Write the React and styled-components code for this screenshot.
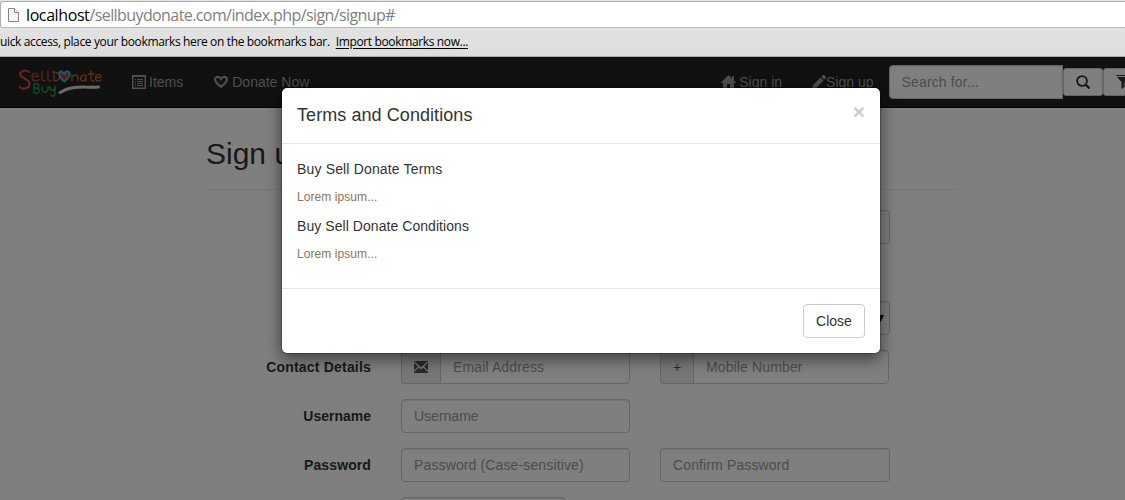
import React from "react";
import styled, { createGlobalStyle } from "styled-components";

const Global = createGlobalStyle`
  *, *::before, *::after { box-sizing: border-box; }
  html, body { margin: 0; height: 100%; overflow: hidden; background: #fff; }
  body { font: 14px/20px "Liberation Sans", Arial, sans-serif; color: #333; }
  #root { height: 100%; }
`;

const Window = styled.div`
  height: 500px;
  overflow: hidden;
  display: flex;
  flex-direction: column;
`;

const BrowserBar = styled.header`
  height: 57px;
  flex: none;
  background: linear-gradient(#e6e6e6, #dedede);
  border-bottom: 1px solid #a8acac;
  white-space: nowrap;
`;

const AddressBar = styled.div`
  height: 27px;
  margin: 1px -4px 0 0;
  display: flex;
  align-items: center;
  padding-left: 6px;
  background: #fff;
  border: 1px solid #adadad;
  border-bottom-color: #b9b9b9;
  border-radius: 3px;
`;

const Url = styled.span`
  margin-left: 6px;
  font: 16px/24px "Open Sans", sans-serif;
  letter-spacing: -0.59px;
  color: #808080;
`;

const Host = styled.span`
  letter-spacing: -0.4px;
  color: #000;
`;

const BookmarkBar = styled.div`
  display: flex;
  height: 28px;
  align-items: center;
  font: 12px/16px "Open Sans", sans-serif;
  letter-spacing: -0.36px;
  color: #000;
`;

const ImportLink = styled.a`
  margin-left: 6px;
  text-decoration: underline;
  text-underline-offset: 2px;
`;

const Page = styled.main`
  position: relative;
  flex: 1;
  overflow: hidden;
  background: #fff;
`;

const Navbar = styled.nav`
  display: flex;
  align-items: center;
  width: 1162px;
  height: 51px;
  padding-left: 18px;
  background: #222;
  border-bottom: 1px solid #080808;
  color: #9d9d9d;
`;

const NavLink = styled.a`
  display: flex;
  align-items: center;
  gap: ${(p) => p.$gap ?? 3}px;
  margin-left: ${(p) => p.$left}px;
  white-space: nowrap;
`;

const SearchGroup = styled.div`
  display: flex;
  align-items: center;
  margin-left: 15px;
`;

const Field = styled.input`
  width: ${(p) => p.$width || 229}px;
  height: 34px;
  padding: 6px 12px;
  font: 14px/20px "Liberation Sans", Arial, sans-serif;
  letter-spacing: ${(p) => p.$spacing ?? 0.13}px;
  color: #555;
  background: #fff;
  border: 1px solid #ccc;
  border-radius: ${(p) => p.$radius || "4px"};
  box-shadow: inset 0 1px 1px rgba(0, 0, 0, 0.075);
  &::placeholder { color: #999; opacity: 1; }
`;

const IconButton = styled.button`
  display: flex;
  align-items: center;
  justify-content: center;
  width: 40px;
  height: 28px;
  padding: 0;
  color: #333;
  background: #fff;
  border: 1px solid #ccc;
  border-radius: 3px;
`;

const Container = styled.section`
  width: 751px;
  margin-left: 206px;
`;

const PageTitle = styled.h2`
  height: 82px;
  margin: 0 0 20px;
  padding-top: 29px;
  font-size: 30px;
  line-height: 33px;
  font-weight: 400;
  border-bottom: 1px solid #eee;
`;

const FormRow = styled.div`
  display: flex;
  align-items: center;
  height: ${(p) => p.$height || 34}px;
  margin-bottom: 15px;
`;

const Label = styled.label`
  width: 165px;
  margin-right: 30px;
  text-align: right;
  font-weight: 700;
  letter-spacing: ${(p) => p.$spacing ?? 0}px;
`;

const Controls = styled.div`
  display: flex;
  gap: 30px;
`;

const InputGroup = styled.div`
  display: flex;
`;

const Addon = styled.span`
  display: flex;
  align-items: center;
  justify-content: center;
  width: ${(p) => p.$width}px;
  height: 34px;
  color: #555;
  background: #eee;
  border: 1px solid #ccc;
  border-right: 0;
  border-radius: 4px 0 0 4px;
`;

const SelectBox = styled.div`
  display: flex;
  align-items: center;
  justify-content: flex-end;
  width: ${(p) => p.$width}px;
  height: 34px;
  padding-right: 5px;
  border: 1px solid #ccc;
  border-radius: 4px;
  box-shadow: inset 0 1px 1px rgba(0, 0, 0, 0.075);
`;

const Backdrop = styled.div`
  position: absolute;
  inset: 0;
  background: rgba(0, 0, 0, 0.5);
`;

const Dialog = styled.div`
  position: absolute;
  top: 30px;
  left: 281px;
  width: 600px;
  height: 267px;
  background: #fff;
  background-clip: padding-box;
  border: 1px solid rgba(0, 0, 0, 0.2);
  border-radius: 6px;
  box-shadow: 0 5px 15px rgba(0, 0, 0, 0.5);
`;

const DialogHeader = styled.div`
  display: flex;
  justify-content: space-between;
  height: 56px;
  padding: 14px 15px;
  border-bottom: 1px solid #e5e5e5;
`;

const DialogTitle = styled.h4`
  margin: 0;
  font-size: 18px;
  line-height: 26px;
  font-weight: 400;
  letter-spacing: 0.07px;
`;

const CloseMark = styled.span`
  font-size: 21px;
  line-height: 19px;
  font-weight: 700;
  color: #ccc;
`;

const DialogBody = styled.div`
  height: 144px;
  padding: 15px;
`;

const Term = styled.p`
  margin: 0 0 10px;
  letter-spacing: ${(p) => p.$spacing}px;
`;

const TermText = styled.p`
  margin: 0 0 10px;
  font-size: 12px;
  line-height: 17px;
  letter-spacing: 0.07px;
  color: #8a7458;
`;

const DialogFooter = styled.div`
  display: flex;
  justify-content: flex-end;
  padding: 15px;
  border-top: 1px solid #e5e5e5;
`;

const CloseButton = styled.button`
  width: 62px;
  height: 34px;
  padding: 0;
  font: 14px/20px "Liberation Sans", Arial, sans-serif;
  color: #333;
  background: #fff;
  border: 1px solid #ccc;
  border-radius: 4px;
`;

const FileIcon = () => (
  <svg width="13" height="16" viewBox="0 0 13 16" fill="#f4f4f4" stroke="#858585">
    <path d="M1.5 1.5h6l4 4v9h-10z" />
    <path d="M7.500 1.500v4h4" />
  </svg>
);

const Logo = () => (
  <svg width="84" height="30" viewBox="0 0 84 30" fill="none" strokeLinecap="round" strokeLinejoin="round" strokeWidth="1.4">
    <path d="M11 5C8 2 1 4 2.500 8.500c1.500 3 9 3.500 9 8.500 0 4.500-7 6-9.500 3" stroke="#d04848" strokeWidth="2.200" />
    <path d="M14.500 9.500h6c0-4.500-6.500-4-6.500 .5 0 5 5 4.500 7 2.500M24 4v8c0 2 1 2 3 2M30 4v8c0 2 1 2 3 2" stroke="#b0453f" />
    <path d="M36 5v9c8 0 8-9-1.500-9" stroke="#b0602e" />
    <path d="M46.500 14.500c-6-4-7-10-3-10l3 2.500c2-4.500 6-2.500 5 1.500-1 3-3 4.500-5 6z" stroke="#3ab8c4" strokeWidth="2" fill="#c22b3e" />
    <path d="M54 14V8m0 2c3-3.500 6-2 6 1v3M68 8.500c-6-2-7 5.500-3 5.500 3 0 3-3 3-5.500V14M73 4v8c0 2 1 2 3 2M70.500 7h5.500M78 10.500h5c0-4.500-5.500-4-5.500 .5 0 4 4 3.500 5.500 2" stroke="#b0602e" />
    <path d="M16 17v9c7 1 7-5 1-5 6 0 5-5-1-4M24 19.500V23c1 3.500 5 3 6-1v-2.500M32 19.500c0 5 4 5 5 1m0-1.500v8c-1 3-3 2.500-4 1" stroke="#239b4e" />
    <path d="M42 25.500c13-8 25-4.500 38.500-5.500" stroke="#d4d4d4" strokeWidth="3" />
  </svg>
);

const ListIcon = () => (
  <svg width="14" height="14" viewBox="0 0 14 14" fill="none" stroke="currentColor">
    <path d="M.75 1v12.250h12.500V1H.75z" strokeWidth="1.500" />
    <path d="M0 1h14" strokeWidth="2" />
    <path d="M3 4.500h1M3 6.500h1M3 8.500h1M3 10.500h1M5 4.500h6M5 6.500h6M5 8.500h6M5 10.500h6" />
  </svg>
);

const HeartIcon = () => (
  <svg width="14" height="14" viewBox="0 0 14 14" fill="none" stroke="currentColor" strokeWidth="2.200">
    <path d="M7 12C4 9 1.100 7 1.100 4.400 1.100 1.500 5 .5 7 4 9 .5 12.900 1.500 12.900 4.400 12.900 7 10 9 7 12z" />
  </svg>
);

const HomeIcon = () => (
  <svg width="15" height="14" viewBox="0 0 15 14" fill="currentColor">
    <path d="M7.500 0L11 3.500V1h2v4.500l2 2V8h-2v6H9V9H6v5H2V8H0v-.5z" />
  </svg>
);

const PencilIcon = () => (
  <svg width="14" height="14" viewBox="0 0 14 14" fill="currentColor">
    <path d="M0 14l1-4L8.500 2.500l3 3L4 13zM9.300 1.700L11 0h1l2 2v1l-1.700 1.700z" />
  </svg>
);

const SearchIcon = () => (
  <svg width="14" height="14" viewBox="0 0 14 14" fill="none" stroke="currentColor" strokeWidth="1.900">
    <circle cx="6" cy="6" r="4.900" />
    <path d="M9.500 9.500l4 4" strokeWidth="2.400" />
  </svg>
);

const FilterIcon = () => (
  <svg width="14" height="14" viewBox="0 0 14 14" fill="currentColor">
    <path d="M0 0h14v1H0zM1 2h12L8.500 7v5L5.500 14V7z" />
  </svg>
);

const MailIcon = () => (
  <svg width="14" height="12" viewBox="0 0 14 12" fill="currentColor">
    <path d="M0 0h14L7 6.500zM0 1.500L4 5.700 0 9.500zM14 1.500L10 5.700l4 3.800zM4.800 6.500L7 8.500l2.200-2L14 11v1H0v-1z" />
  </svg>
);

const ArrowIcon = () => (
  <svg width="7" height="7" viewBox="0 0 7 7" fill="#000">
    <path d="M0 0h7L3.500 7z" />
  </svg>
);

export default function App() {
  return (
    <Window>
      <Global />
      <BrowserBar>
        <AddressBar>
          <FileIcon />
          <Url><Host>localhost</Host>/sellbuydonate.com/index.php/sign/signup#</Url>
        </AddressBar>
        <BookmarkBar>
          <span>uick access, place your bookmarks here on the bookmarks bar.</span>
          <ImportLink>Import bookmarks now...</ImportLink>
        </BookmarkBar>
      </BrowserBar>
      <Page>
        <Navbar>
          <Logo />
          <NavLink $left={30}><ListIcon />Items</NavLink>
          <NavLink $left={31} $gap={4}><HeartIcon />Donate Now</NavLink>
          <NavLink $left={412}><HomeIcon />Sign in</NavLink>
          <NavLink $left={30} $gap={0}><PencilIcon />Sign up</NavLink>
          <SearchGroup>
            <Field $width={174} $radius="4px 0 0 4px" placeholder="Search for..." />
            <IconButton aria-label="Search"><SearchIcon /></IconButton>
            <IconButton aria-label="Filter"><FilterIcon /></IconButton>
          </SearchGroup>
        </Navbar>
        <Container>
          <PageTitle>Sign up</PageTitle>
          <FormRow><Label /><Controls><Field /><Field $width={230} /></Controls></FormRow>
          <FormRow $height={27} />
          <FormRow><Label /><Controls><SelectBox $width={229} /><SelectBox $width={230}><ArrowIcon /></SelectBox></Controls></FormRow>
          <FormRow>
            <Label $spacing={0.19}>Contact Details</Label>
            <Controls>
              <InputGroup>
                <Addon $width={39}><MailIcon /></Addon>
                <Field $width={190} $radius="0 4px 4px 0" placeholder="Email Address" />
              </InputGroup>
              <InputGroup>
                <Addon $width={33}>+</Addon>
                <Field $width={196} $radius="0 4px 4px 0" placeholder="Mobile Number" />
              </InputGroup>
            </Controls>
          </FormRow>
          <FormRow><Label>Username</Label><Field $spacing={0} placeholder="Username" /></FormRow>
          <FormRow>
            <Label $spacing={0.1}>Password</Label>
            <Controls>
              <Field placeholder="Password (Case-sensitive)" />
              <Field $width={230} placeholder="Confirm Password" />
            </Controls>
          </FormRow>
          <FormRow><Label /><Field $width={165} /></FormRow>
        </Container>
        <Backdrop />
        <Dialog role="dialog">
          <DialogHeader>
            <DialogTitle>Terms and Conditions</DialogTitle>
            <CloseMark>×</CloseMark>
          </DialogHeader>
          <DialogBody>
            <Term $spacing={0.16}>Buy Sell Donate Terms</Term>
            <TermText>Lorem ipsum...</TermText>
            <Term $spacing={0.06}>Buy Sell Donate Conditions</Term>
            <TermText>Lorem ipsum...</TermText>
          </DialogBody>
          <DialogFooter><CloseButton>Close</CloseButton></DialogFooter>
        </Dialog>
      </Page>
    </Window>
  );
}
